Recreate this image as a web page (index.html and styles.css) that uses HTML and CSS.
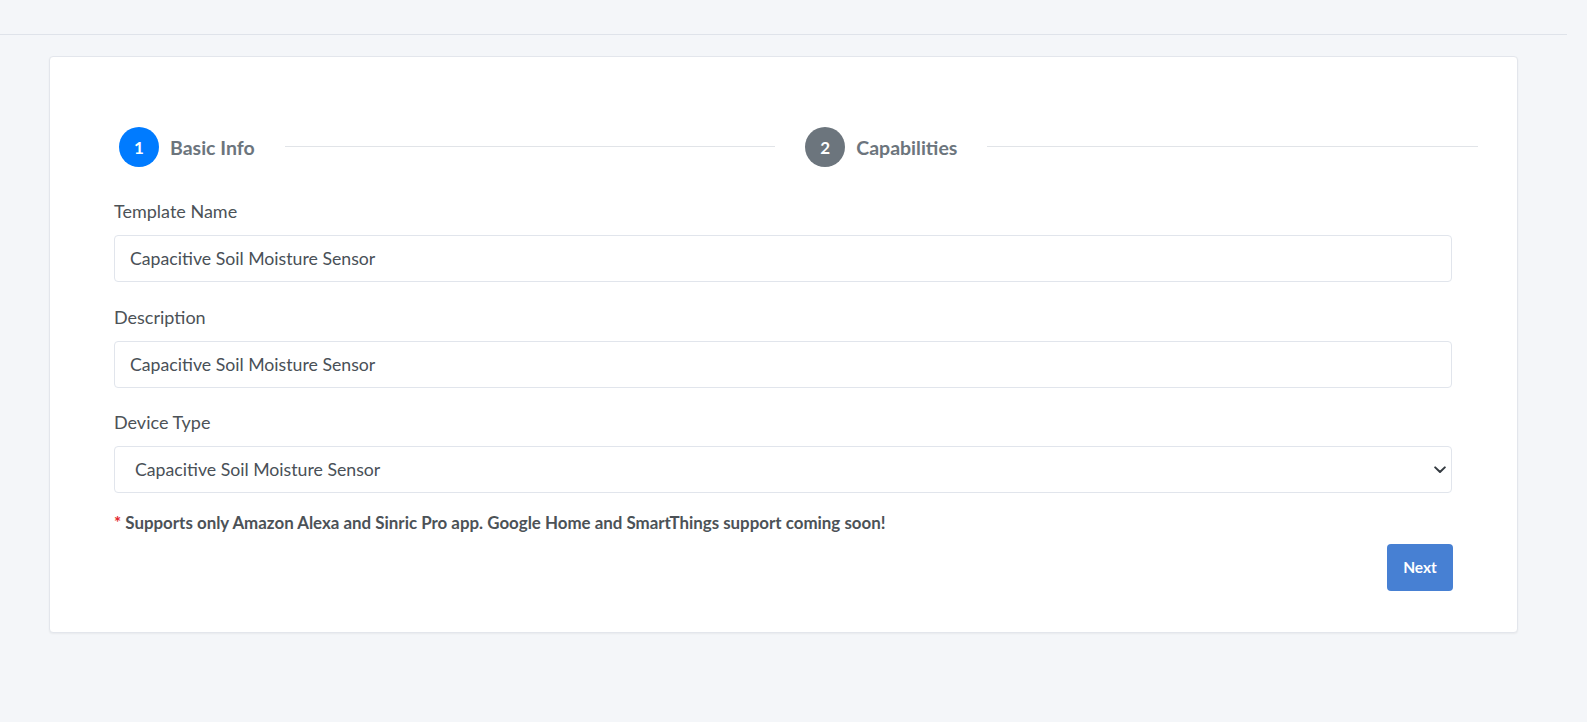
FILE: index.html
```html
<!DOCTYPE html>
<html lang="en">
<head>
<meta charset="utf-8">
<title>Template</title>
<link rel="stylesheet" href="styles.css">
</head>
<body>
<header class="topbar"></header>
<main class="content">
  <section class="card">
    <div class="stepper">
      <div class="step">
        <span class="step-circle step-active">1</span>
        <span class="step-label">Basic Info</span>
      </div>
      <div class="step-line"></div>
      <div class="step step-second">
        <span class="step-circle step-idle">2</span>
        <span class="step-label">Capabilities</span>
      </div>
      <div class="step-line step-line-last"></div>
    </div>

    <form class="form">
      <div class="form-group">
        <label class="form-label" for="tname">Template Name</label>
        <input class="form-control" id="tname" type="text" value="Capacitive Soil Moisture Sensor">
      </div>
      <div class="form-group">
        <label class="form-label" for="tdesc">Description</label>
        <input class="form-control" id="tdesc" type="text" value="Capacitive Soil Moisture Sensor">
      </div>
      <div class="form-group form-group-last">
        <label class="form-label" for="ttype">Device Type</label>
        <div class="select-wrap">
          <select class="form-control form-select" id="ttype">
            <option>Capacitive Soil Moisture Sensor</option>
          </select>
          <svg class="select-arrow" width="12" height="8" viewBox="0 0 12 8" aria-hidden="true">
            <path d="M1.2 1.4 L6 6 L10.8 1.4" fill="none" stroke="#343a40" stroke-width="2" stroke-linecap="round" stroke-linejoin="round"/>
          </svg>
        </div>
      </div>
      <p class="note"><span class="note-star">*</span> Supports only Amazon Alexa and Sinric Pro app. Google Home and SmartThings support coming soon!</p>
      <div class="actions">
        <button class="btn-next" type="button">Next</button>
      </div>
    </form>
  </section>
</main>
</body>
</html>
```
FILE: styles.css
```css
html, body {
  margin: 0;
  padding: 0;
}

body {
  background: #f4f6f9;
  font-family: "Lato", "Liberation Sans", sans-serif;
  color: #495057;
  width: 1587px;
  height: 722px;
  overflow: hidden;
}

.topbar {
  height: 34px;
  margin-right: 20px;
  border-bottom: 1px solid #dfe3ea;
}

.content {
  padding: 21px 0 0 49px;
}

.card {
  width: 1469px;
  box-sizing: border-box;
  background: #ffffff;
  border: 1px solid #e3e6ec;
  border-radius: 4px;
  box-shadow: 0 1px 2px rgba(0, 0, 0, 0.05);
  padding: 70px 65px 41px 64px;
}

.stepper {
  display: flex;
  align-items: center;
  margin: 0 -26px 0 5px;
  height: 40px;
}

.step {
  display: flex;
  align-items: center;
}

.step-second {
  margin-left: 30px;
}

.step-circle {
  width: 40px;
  height: 40px;
  border-radius: 50%;
  display: flex;
  align-items: center;
  justify-content: center;
  color: #ffffff;
  font-weight: 700;
  font-size: 17px;
}

.step-active {
  background: #007bff;
}

.step-idle {
  background: #6c757d;
}

.step-label {
  margin-left: 11px;
  font-weight: 700;
  font-size: 19.5px;
  color: #6c757d;
}

.step-line {
  flex: 1;
  height: 1px;
  background: #e1e4e8;
  margin-left: 30px;
  margin-top: -2px;
}

.form {
  margin-top: 32px;
}

.form-group {
  margin-bottom: 22.5px;
}

.form-group-last {
  margin-bottom: 19px;
}

.form-label {
  display: block;
  font-size: 18px;
  line-height: 24px;
  color: #4c5257;
  margin-bottom: 12px;
}

.form-control {
  display: block;
  width: 100%;
  box-sizing: border-box;
  height: 47px;
  border: 1px solid #e1e5ec;
  border-radius: 4px;
  background: #ffffff;
  font-family: "Lato", "Liberation Sans", sans-serif;
  font-size: 17.7px;
  color: #495057;
  padding: 0 15px;
  margin: 0;
  outline: none;
}

.select-wrap {
  position: relative;
}

.form-select {
  appearance: none;
  -webkit-appearance: none;
  padding-left: 20px;
}

.select-arrow {
  position: absolute;
  right: 6px;
  top: 20px;
}

.note {
  margin: 0 0 10px 0;
  font-size: 16.9px;
  line-height: 22px;
  font-weight: 700;
  color: #4c5257;
}

.note-star {
  color: #e3262f;
}

.actions {
  display: flex;
  justify-content: flex-end;
}

.btn-next {
  width: 66px;
  height: 46.5px;
  border: none;
  border-radius: 4px;
  background: #4780d3;
  color: #ffffff;
  font-family: "Lato", "Liberation Sans", sans-serif;
  font-weight: 700;
  font-size: 15.5px;
  padding: 0;
  margin-right: -1px;
}
```
